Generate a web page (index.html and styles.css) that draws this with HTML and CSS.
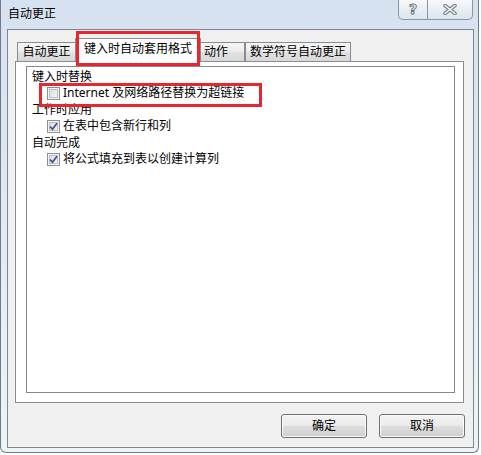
FILE: index.html
```html
<!DOCTYPE html>
<html lang="zh-CN">
<head>
<meta charset="utf-8">
<title>自动更正</title>
<link rel="stylesheet" href="styles.css">
</head>
<body>
<div class="window">
  <div class="titlebar">
    <span class="title">自动更正</span>
    <div class="caption-btns">
      <div class="cap help"><span class="help-glyph">?</span></div>
      <div class="cap close">
        <svg width="14" height="11" viewBox="0 0 14 11">
          <path d="M2 1.5 L12 9.5 M12 1.5 L2 9.5" stroke="#7a7f86" stroke-width="3.6" stroke-linecap="round" fill="none"/>
          <path d="M2 1.5 L12 9.5 M12 1.5 L2 9.5" stroke="#ffffff" stroke-width="1.4" stroke-linecap="round" fill="none"/>
        </svg>
      </div>
    </div>
  </div>
  <div class="client">
    <div class="tabs">
      <div class="tab tab-w1">自动更正</div>
      <div class="tab active">键入时自动套用格式</div>
      <div class="tab tab-w3">动作</div>
      <div class="tab tab-w4">数学符号自动更正</div>
    </div>
    <div class="panel">
      <div class="group">
        <div class="label">键入时替换</div>
        <div class="cb-row marked">
          <span class="cb"></span>
          <span>Internet 及网络路径替换为超链接</span>
        </div>
        <div class="label">工作时应用</div>
        <div class="cb-row">
          <span class="cb">
            <svg width="11" height="11" viewBox="0 0 11 11"><path d="M2 5.5 L4.5 8.2 L9 2.2" stroke="#3f5283" stroke-width="1.7" fill="none"/></svg>
          </span>
          <span>在表中包含新行和列</span>
        </div>
        <div class="label">自动完成</div>
        <div class="cb-row">
          <span class="cb">
            <svg width="11" height="11" viewBox="0 0 11 11"><path d="M2 5.5 L4.5 8.2 L9 2.2" stroke="#3f5283" stroke-width="1.7" fill="none"/></svg>
          </span>
          <span>将公式填充到表以创建计算列</span>
        </div>
      </div>
    </div>
    <div class="buttons">
      <button class="btn">确定</button>
      <button class="btn">取消</button>
    </div>
  </div>
</div>
</body>
</html>
```
FILE: styles.css
```css
html, body {
  margin: 0;
  padding: 0;
  background: #ffffff;
}
body {
  font-family: "Noto Sans", "Noto Sans CJK SC", sans-serif;
  font-size: 12px;
  color: #000;
}
.window {
  width: 479px;
  height: 453px;
  box-sizing: border-box;
  border: 1px solid #6f7b88;
  border-top: none;
  border-radius: 0 0 6px 6px;
  background: linear-gradient(180deg, #d6e2f0 0%, #dde8f4 40%, #e6f1f7 80%, #ecf6f6 100%);
  display: flex;
  flex-direction: column;
}
.titlebar {
  height: 29px;
  display: flex;
  justify-content: space-between;
  align-items: flex-start;
  flex: none;
}
.title {
  padding: 7px 0 0 7px;
  line-height: 14px;
}
.caption-btns {
  display: flex;
  height: 20px;
  box-sizing: border-box;
  margin-right: 5px;
  border: 1px solid #8796a8;
  border-top: none;
  border-radius: 0 0 5px 5px;
  background: linear-gradient(180deg, #f7f9fc 0%, #e9eef4 50%, #dde5ee 100%);
  overflow: hidden;
}
.cap {
  display: flex;
  align-items: center;
  justify-content: center;
  height: 19px;
}
.help {
  width: 28px;
  border-right: 1px solid #8796a8;
}
.close {
  width: 44px;
}
.help-glyph {
  font-family: "DejaVu Sans", sans-serif;
  font-weight: bold;
  font-size: 14px;
  line-height: 14px;
  color: #ffffff;
  -webkit-text-stroke: 1px #70767e;
  margin-top: -1px;
}
.client {
  width: 467px;
  height: 419px;
  box-sizing: border-box;
  margin-left: 6px;
  border: 1px solid #7e8893;
  background: #f0f0f0;
  display: flex;
  flex-direction: column;
}
.tabs {
  display: flex;
  align-items: flex-end;
  height: 23px;
  margin: 8px 9px 0 7px;
  padding-left: 2px;
  position: relative;
  z-index: 1;
}
.tab {
  height: 19px;
  box-sizing: border-box;
  border: 1px solid #898c95;
  border-bottom: none;
  line-height: 18px;
  text-align: center;
  white-space: nowrap;
  background: linear-gradient(180deg, #f5f5f5 0%, #ededed 45%, #e0e0e0 55%, #d8d8d8 100%);
}
.tab-w1 { width: 59px; }
.tab-w3 { width: 45px; text-align: left; padding-left: 3px; }
.tab-w4 { width: 106px; }
.tab.active {
  width: 126px;
  height: 24px;
  margin: 0 -1px -1px -1px;
  line-height: 20px;
  background: #ffffff;
  position: relative;
  z-index: 2;
}
.tab.active::after {
  content: "";
  position: absolute;
  left: 0;
  top: -8px;
  width: 124px;
  height: 35px;
  box-sizing: border-box;
  border: 3px solid #e6282e;
}
.panel {
  height: 342px;
  box-sizing: border-box;
  margin: 0 9px 0 7px;
  border: 1px solid #898c95;
  background: #ffffff;
  padding: 4px 8px 9px 10px;
}
.group {
  height: 100%;
  box-sizing: border-box;
  border: 1px solid #828790;
  padding: 1px 0 0 5px;
}
.label {
  line-height: 17px;
  height: 17px;
}
.cb-row {
  display: flex;
  align-items: center;
  gap: 3px;
  height: 16px;
  padding-left: 15px;
  line-height: 16px;
  position: relative;
}
.cb-row.marked::after {
  content: "";
  position: absolute;
  left: 7px;
  top: -2px;
  width: 223px;
  height: 24px;
  box-sizing: border-box;
  border: 3px solid #e6282e;
}
.cb {
  width: 13px;
  height: 13px;
  box-sizing: border-box;
  border: 1px solid #8e8f8f;
  background: linear-gradient(135deg, #d4d8dd 0%, #e9eaec 55%, #fbfbfb 100%);
  box-shadow: inset 0 0 0 1px #f6f6f6, inset 0 0 0 2px #b9bec4;
  display: flex;
  align-items: center;
  justify-content: center;
  flex: none;
}
.cb svg {
  display: block;
}
.buttons {
  display: flex;
  justify-content: flex-end;
  gap: 12px;
  margin: 11px 8px 0 0;
}
.btn {
  width: 86px;
  height: 24px;
  box-sizing: border-box;
  border: 1px solid #707070;
  border-radius: 3px;
  background: linear-gradient(180deg, #f2f2f2 0%, #ebebeb 48%, #dddddd 52%, #cfcfcf 100%);
  box-shadow: inset 0 0 0 1px #fbfbfb;
  font-family: "Noto Sans", "Noto Sans CJK SC", sans-serif;
  font-size: 12px;
  line-height: 20px;
  padding: 0;
  color: #000;
}
```
